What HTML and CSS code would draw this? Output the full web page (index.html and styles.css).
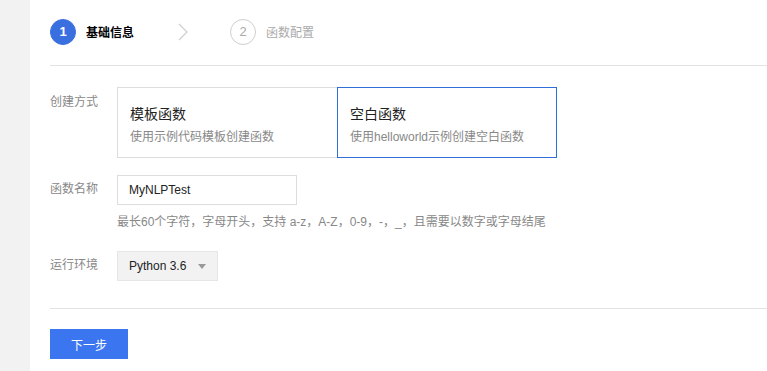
FILE: index.html
```html
<!DOCTYPE html>
<html lang="zh">
<head>
  <meta charset="UTF-8">
  <title>新建函数</title>
  <link rel="stylesheet" href="styles.css">
</head>
<body>
  <div class="page">
    <div class="sidebar"></div>
    <div class="main">
      <div class="steps">
        <div class="step active">
          <span class="step-num">1</span>
          <span class="step-text">基础信息</span>
        </div>
        <svg class="step-arrow" width="10" height="18" viewBox="0 0 10 18">
          <path d="M1 1 L9 9 L1 17" fill="none" stroke="#cfcfcf" stroke-width="1.2"/>
        </svg>
        <div class="step">
          <span class="step-num">2</span>
          <span class="step-text">函数配置</span>
        </div>
      </div>

      <div class="form">
        <div class="row">
          <div class="label label-top">创建方式</div>
          <div class="cards">
            <div class="card">
              <div class="card-title">模板函数</div>
              <div class="card-desc">使用示例代码模板创建函数</div>
            </div>
            <div class="card selected">
              <div class="card-title">空白函数</div>
              <div class="card-desc">使用helloworld示例创建空白函数</div>
            </div>
          </div>
        </div>

        <div class="row row-name">
          <div class="label">函数名称</div>
          <div class="field">
            <div class="input">MyNLPTest</div>
          </div>
        </div>
        <div class="hint">最长60个字符，字母开头，支持 a-z，A-Z，0-9，-，_，且需要以数字或字母结尾</div>

        <div class="row row-env">
          <div class="label">运行环境</div>
          <div class="select">
            <span>Python 3.6</span>
            <span class="caret"></span>
          </div>
        </div>
      </div>

      <div class="footer">
        <button class="btn-next">下一步</button>
      </div>
    </div>
  </div>
</body>
</html>
```

FILE: styles.css
```css
body {
  margin: 0;
  font-family: "Liberation Sans", "Noto Sans CJK SC", sans-serif;
  background: #fff;
  color: #333;
}

.page {
  display: flex;
  height: 371px;
  overflow: hidden;
}

.sidebar {
  width: 30px;
  background: #f2f2f2;
  flex-shrink: 0;
}

.main {
  flex: 1;
  padding-left: 20px;
}

.steps {
  display: flex;
  align-items: center;
  height: 66px;
  border-bottom: 1px solid #e2e2e2;
  box-sizing: border-box;
  padding-bottom: 2px;
}

.step {
  display: flex;
  align-items: center;
}

.step-num {
  width: 24px;
  height: 24px;
  border-radius: 50%;
  border: 1px solid #cfcfcf;
  color: #aaa;
  font-size: 13px;
  display: flex;
  align-items: center;
  justify-content: center;
}

.step-text {
  margin-left: 10px;
  font-size: 12px;
  color: #aaa;
}

.step.active .step-num {
  background: #3a6fe0;
  border-color: #3a6fe0;
  color: #fff;
  font-weight: bold;
}

.step.active .step-text {
  color: #000;
  font-weight: bold;
}

.step-arrow {
  margin: 0 42px 0 44px;
}

.form {
  padding-top: 21px;
}

.row {
  display: flex;
}

.label {
  width: 67px;
  font-size: 12px;
  color: #888;
  line-height: 29px;
}

.label-top {
  line-height: 16px;
  padding-top: 7px;
}

.cards {
  display: flex;
}

.card {
  width: 221px;
  height: 71px;
  box-sizing: border-box;
  border: 1px solid #dddddd;
  padding: 16px 12px 0;
}

.card + .card {
  margin-left: -1px;
  width: 220px;
}

.card.selected {
  border-color: #2f6fd8;
}

.card-title {
  font-size: 14px;
  color: #222;
  line-height: 20px;
}

.card-desc {
  font-size: 12px;
  color: #888;
  line-height: 18px;
  margin-top: 4px;
}

.row-name {
  margin-top: 17px;
}

.input {
  width: 180px;
  height: 30px;
  box-sizing: border-box;
  border: 1px solid #dddddd;
  font-size: 12px;
  color: #222;
  padding: 0 11px;
  line-height: 28px;
}

.hint {
  margin-left: 67px;
  margin-top: 9px;
  font-size: 12px;
  color: #888;
  line-height: 16px;
}

.row-env {
  margin-top: 21px;
}

.select {
  width: 101px;
  height: 30px;
  box-sizing: border-box;
  background: #f2f2f2;
  border: 1px solid #e6e6e6;
  display: flex;
  align-items: center;
  justify-content: space-between;
  padding: 0 11px;
  font-size: 12px;
  color: #222;
}

.caret {
  width: 0;
  height: 0;
  border-left: 4px solid transparent;
  border-right: 4px solid transparent;
  border-top: 5px solid #999;
}

.footer {
  margin-top: 27px;
  border-top: 1px solid #e2e2e2;
  padding-top: 20px;
}

.btn-next {
  width: 78px;
  height: 30px;
  border: none;
  background: #3b76f0;
  color: #fff;
  font-size: 12px;
  font-family: "Noto Sans CJK SC", sans-serif;
  cursor: pointer;
}
```
